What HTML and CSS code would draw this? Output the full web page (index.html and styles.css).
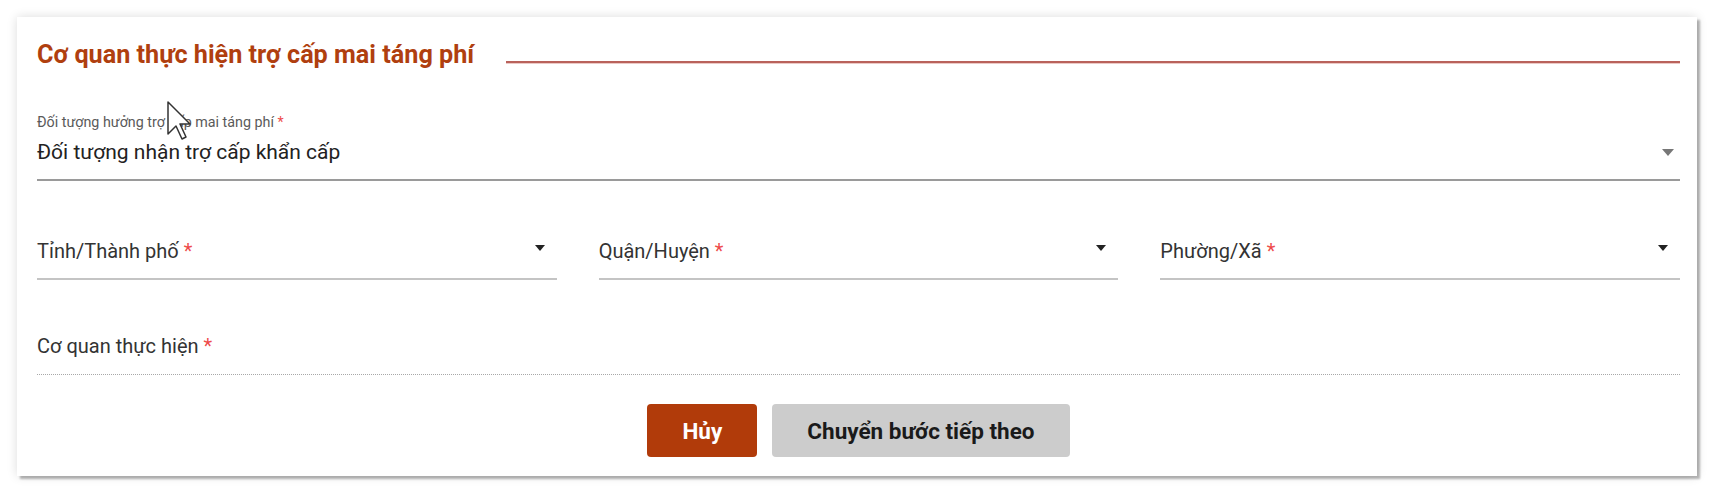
FILE: index.html
```html
<!DOCTYPE html>
<html lang="vi">
<head>
  <meta charset="UTF-8">
  <meta name="viewport" content="width=device-width, initial-scale=1.0">
  <title>Cơ quan thực hiện trợ cấp mai táng phí</title>
  <link rel="stylesheet" href="styles.css">
</head>
<body>

  <div class="card">
    <div class="section-title">
      <h2>Cơ quan thực hiện trợ cấp mai táng phí</h2>
      <span class="title-line"></span>
    </div>

    <div class="field field-filled">
      <label class="field-label-small">Đối tượng hưởng trợ cấp mai táng phí <span class="req">*</span></label>
      <div class="field-value">
        <span>Đối tượng nhận trợ cấp khẩn cấp</span>
        <span class="caret caret-light"></span>
      </div>
    </div>

    <div class="field-row">
      <div class="field">
        <div class="field-value">
          <span class="placeholder">Tỉnh/Thành phố <span class="req">*</span></span>
          <span class="caret"></span>
        </div>
      </div>
      <div class="field">
        <div class="field-value">
          <span class="placeholder">Quận/Huyện <span class="req">*</span></span>
          <span class="caret"></span>
        </div>
      </div>
      <div class="field">
        <div class="field-value">
          <span class="placeholder">Phường/Xã <span class="req">*</span></span>
          <span class="caret"></span>
        </div>
      </div>
    </div>

    <div class="field field-disabled">
      <div class="field-value">
        <span class="placeholder">Cơ quan thực hiện <span class="req">*</span></span>
      </div>
    </div>

    <div class="actions">
      <button class="btn btn-cancel">Hủy</button>
      <button class="btn btn-next">Chuyển bước tiếp theo</button>
    </div>

    <!-- mouse pointer captured in the screenshot -->
    <svg class="pointer" width="24" height="40" viewBox="0 0 24 40">
      <path d="M1 1 L1 33 L9 25 L15 38 L19 36 L13 23 L23 23 Z" fill="#fff" stroke="#333" stroke-width="1.5" stroke-linejoin="round"/>
    </svg>
  </div>

</body>
</html>
```

FILE: styles.css
```css
/* General page styling */
body {
  font-family: Roboto, 'Liberation Sans', sans-serif;
  margin: 0;
  padding: 17px 21px 20px 17px;
  background-color: #ffffff;
  color: #222;
}

.card {
  position: relative;
  background-color: #ffffff;
  padding: 23px 17px 20px 20px;
  height: 459px;
  box-sizing: border-box;
  box-shadow: 3px 3px 2px rgba(0, 0, 0, 0.28), 0 0 10px rgba(0, 0, 0, 0.14);
}

/* Section heading with rule */
.section-title {
  display: flex;
  align-items: flex-end;
  height: 30px;
}

.section-title h2 {
  margin: 0;
  font-size: 25.2px;
  line-height: 30px;
  font-weight: 700;
  color: #b03f0f;
  white-space: nowrap;
}

.title-line {
  flex: 1;
  height: 2px;
  margin: 0 0 7px 32px;
  background-color: #b9625b;
  box-shadow: 0 1px 0 #ecc9c6;
}

/* Form fields */
.field {
  border-bottom: 2px solid #c4c4c4;
  padding-bottom: 14px;
}

.field-filled {
  margin-top: 44px;
  border-bottom-color: #9a9a9a;
}

.field-label-small {
  display: block;
  font-size: 14.3px;
  line-height: 16px;
  color: #5a5a5a;
  margin-bottom: 9px;
}

.field-value {
  display: flex;
  align-items: center;
  justify-content: space-between;
  font-size: 21px;
  line-height: 26px;
  color: #222;
}

.placeholder {
  font-size: 20px;
  color: #333;
}

.req {
  color: #ee4b4b;
}

.caret {
  width: 0;
  height: 0;
  margin-right: 12px;
  border-left: 5px solid transparent;
  border-right: 5px solid transparent;
  border-top: 6px solid #222;
}

.caret-light {
  border-left-width: 6px;
  border-right-width: 6px;
  border-top: 7px solid #777;
  margin-right: 6px;
}

.field-row {
  display: grid;
  grid-template-columns: repeat(3, 1fr);
  gap: 42px;
  margin-top: 57px;
}

.field-row .caret {
  margin-bottom: 6px;
}

.field-disabled {
  margin-top: 53px;
  border-bottom: 1px dotted #a8a8a8;
  padding-bottom: 15px;
}

/* Buttons */
.actions {
  display: flex;
  justify-content: center;
  gap: 15px;
  margin-top: 29px;
}

.btn {
  height: 53px;
  padding: 0 35px;
  border: none;
  border-radius: 4px;
  font-family: Roboto, 'Liberation Sans', sans-serif;
  font-size: 22.5px;
  font-weight: 700;
  cursor: pointer;
}

.btn-cancel {
  background-color: #b13b0a;
  color: #ffffff;
}

.btn-next {
  background-color: #cccccc;
  color: #1a1a1a;
}

.pointer {
  position: absolute;
  left: 150px;
  top: 84px;
}
```
